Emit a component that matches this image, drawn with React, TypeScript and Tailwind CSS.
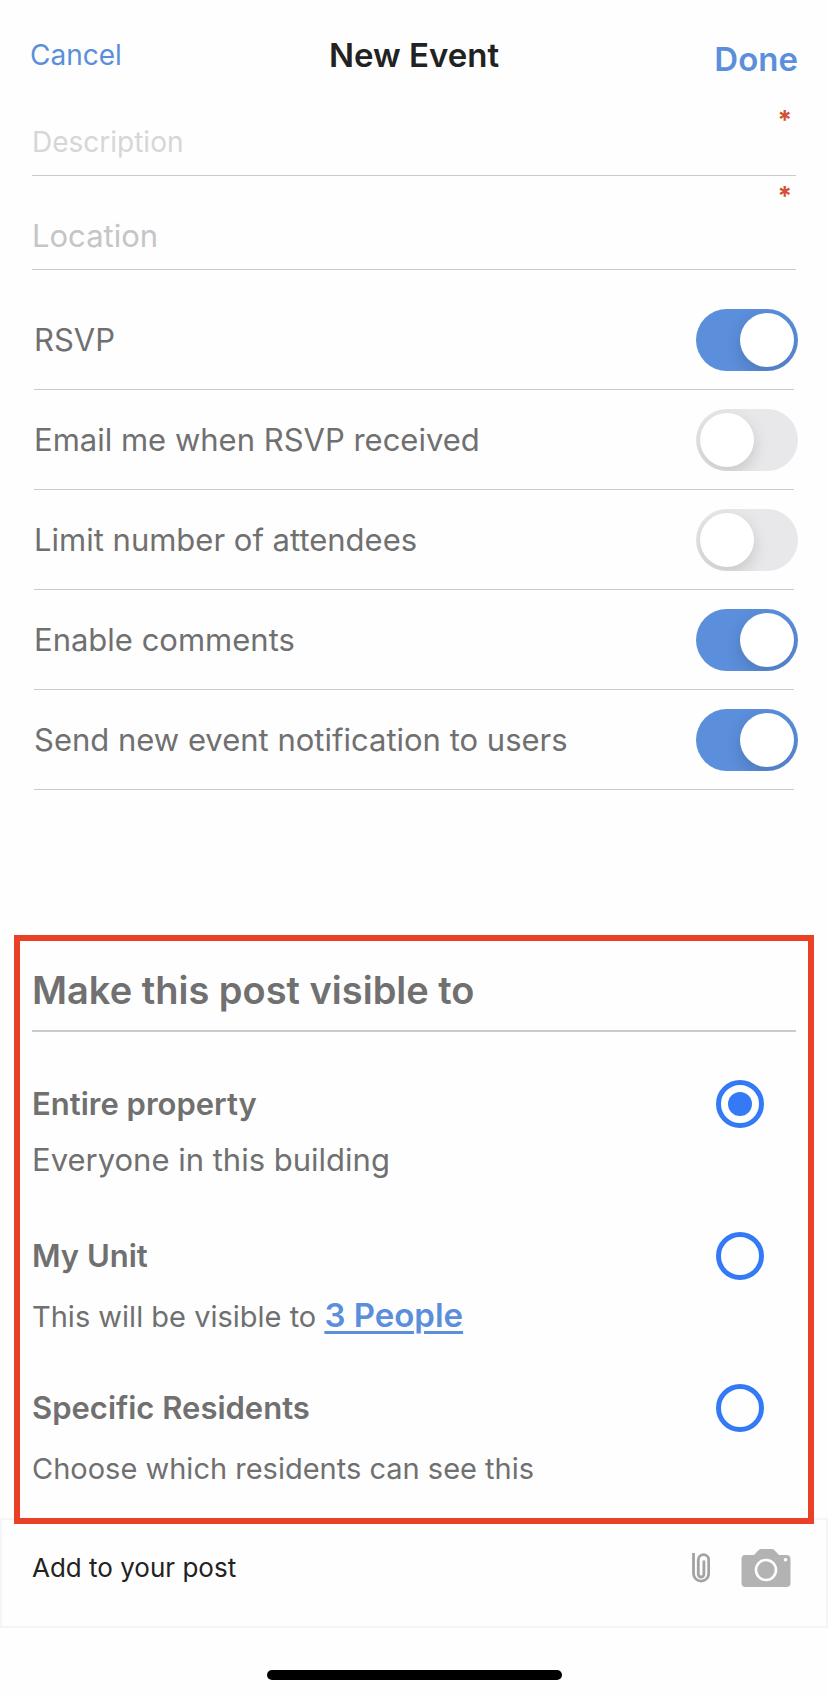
import React, { useState } from 'react';

const initialSettings = [
  { id: 'rsvp', label: 'RSVP', on: true },
  { id: 'email', label: 'Email me when RSVP received', on: false },
  { id: 'limit', label: 'Limit number of attendees', on: false },
  { id: 'comments', label: 'Enable comments', on: true },
  { id: 'notify', label: 'Send new event notification to users', on: true },
];

function Switch({ id, checked, onChange }: { id: string; checked: boolean; onChange: () => void }) {
  return (
    <input
      id={id}
      type="checkbox"
      role="switch"
      checked={checked}
      onChange={onChange}
      className="appearance-none shrink-0 -mr-1 h-[62px] w-[102px] rounded-full overflow-hidden bg-[#e8e8ea] p-1 transition-colors checked:bg-[#5b8edb] before:block before:size-[54px] before:rounded-full before:bg-white before:shadow-[0_6px_16px_rgba(0,0,0,0.15)] checked:before:ml-10"
    />
  );
}

function Field({ id, placeholder, className, markClass }: { id: string; placeholder: string; className: string; markClass: string }) {
  return (
    <div className="relative border-b border-[#cbcbcb] pb-[13px]">
      <input
        id={id}
        aria-label={placeholder}
        placeholder={placeholder}
        required
        className={`block w-full h-10 bg-transparent outline-none text-[#707070] ${className}`}
      />
      <span className={`absolute right-1 text-[26px] leading-6 font-bold text-[#d2512f] ${markClass}`}>*</span>
    </div>
  );
}

function PaperclipIcon() {
  return (
    <svg width="18" height="30" viewBox="0 0 18 30" fill="none" stroke="#a3a3a3" strokeWidth="2.8">
      <path d="M1.5 0v20.5a7.6 7.6 0 0 0 15.2 0V6.8a5.2 5.2 0 0 0-10.4 0v14.4a2.8 2.8 0 0 0 5.6 0V7.5" />
    </svg>
  );
}

function CameraIcon() {
  return (
    <svg width="50" height="38" viewBox="0 0 50 38">
      <path
        d="M4 6h9l4.5-4.8Q18.600 0 20.500 0h10Q32.400 0 33.500 1.200L38 6h7.500Q49.500 6 49.500 10v24q0 4-4 4H4.500Q.5 38 .5 34V10q0-4 3.500-4z"
        fill="#b3b3b3"
      />
      <circle cx="25" cy="21" r="10" fill="none" stroke="#fff" strokeWidth="2.600" />
      <circle cx="44.500" cy="10.800" r="1.800" fill="#fff" />
    </svg>
  );
}

export default function App() {
  const [settings, setSettings] = useState(initialSettings);
  const [audience, setAudience] = useState('property');

  const toggle = (id: string) => {
    setSettings(settings.map((s) => (s.id === id ? { ...s, on: !s.on } : s)));
  };

  const audiences = [
    { id: 'property', title: 'Entire property', detailClass: 'mt-3 text-[31px]', detail: <>Everyone in this building</> },
    {
      id: 'unit',
      title: 'My Unit',
      detailClass: 'mt-[17px] text-[29px]',
      detail: (
        <>
          This will be visible to{' '}
          <a href="#people" className="text-[33px] leading-none font-semibold text-[#5b8edb] underline decoration-[3px] underline-offset-4">
            3 People
          </a>
        </>
      ),
    },
    { id: 'residents', title: 'Specific Residents', detailClass: 'mt-[17px] text-[29px]', detail: <>Choose which residents can see this</> },
  ];

  return (
    <div className="min-h-screen bg-[#fefefe] font-[Inter,sans-serif] text-[#707070]">
      <header className="grid grid-cols-3 items-center h-[110px] px-[30px]">
        <button className="justify-self-start text-[28px] leading-10 text-[#5b8edb]">Cancel</button>
        <h1 className="text-center text-[33px] leading-10 font-semibold text-[#222]">New Event</h1>
        <button className="justify-self-end pt-2 text-[33px] leading-10 font-semibold text-[#5b8edb]">Done</button>
      </header>

      <main>
        <div className="mx-8">
          <div className="pt-3">
            <Field id="description" placeholder="Description" className="text-[28px] placeholder:text-[#d6d6d6]" markClass="-top-[14px]" />
          </div>
          <div className="pt-10">
            <Field id="location" placeholder="Location" className="text-[31px] placeholder:text-[#c5c5c7]" markClass="-top-8" />
          </div>
        </div>

        <div className="mx-[34px] mt-5">
          {settings.map((s) => (
            <div key={s.id} className="flex items-center justify-between h-[100px] border-b border-[#cbcbcb]">
              <label htmlFor={s.id} className="text-[31px] leading-10">{s.label}</label>
              <Switch id={s.id} checked={s.on} onChange={() => toggle(s.id)} />
            </div>
          ))}
        </div>

        {/* Visibility */}
        <section className="relative z-10 mx-[14px] mt-[145px] border-[6px] border-[#ea4025] px-3 pb-[29px]">
          <h2 className="border-b-2 border-[#cbcbcb] pt-[25px] pb-4 text-[38px] leading-[48px] font-semibold">
            Make this post visible to
          </h2>
          <div role="radiogroup" aria-label="Make this post visible to" className="grid grid-rows-[152px_152px_auto] pt-12">
            {audiences.map((a) => (
              <div key={a.id}>
                <div className="flex items-center justify-between pr-8">
                  <label htmlFor={a.id} className="text-[31px] leading-[48px] font-semibold">{a.title}</label>
                  <input
                    id={a.id}
                    type="radio"
                    name="audience"
                    checked={audience === a.id}
                    onChange={() => setAudience(a.id)}
                    className="appearance-none grid place-items-center size-12 rounded-full border-[5px] border-[#347af6] checked:before:size-6 checked:before:rounded-full checked:before:bg-[#347af6]"
                  />
                </div>
                <p className={`leading-10 ${a.detailClass}`}>{a.detail}</p>
              </div>
            ))}
          </div>
        </section>
      </main>

      <footer>
        <div className="flex items-center h-[110px] -mt-[6px] border-2 border-[#f5f5f5] pl-[30px] pr-[35px] pb-[10px]">
          <span className="flex-1 text-[26px] leading-10 text-[#222]">Add to your post</span>
          <button aria-label="Attach a file" className="mr-[31px]">
            <PaperclipIcon />
          </button>
          <button aria-label="Add a photo">
            <CameraIcon />
          </button>
        </div>
        <div className="pt-[42px] pb-[15px]">
          <div className="mx-auto h-[10px] w-[295px] rounded-full bg-black" />
        </div>
      </footer>
    </div>
  );
}
